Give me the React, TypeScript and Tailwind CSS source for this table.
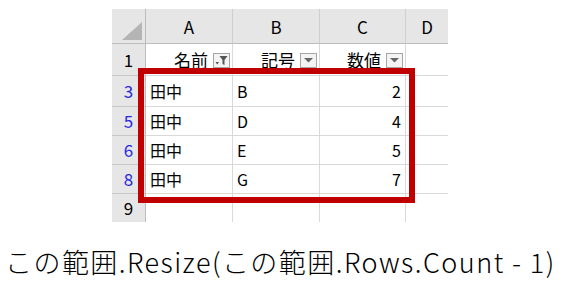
const font = { fontFamily: '"Noto Sans CJK JP", "Noto Sans", sans-serif' };

const rows = [
  { n: '3', name: '田中', code: 'B', value: '2', h: 'h-[31px]' },
  { n: '5', name: '田中', code: 'D', value: '4', h: 'h-[29px]' },
  { n: '6', name: '田中', code: 'E', value: '5', h: 'h-[29px]' },
  { n: '8', name: '田中', code: 'G', value: '7', h: 'h-[29px]' },
];

const FilterButton = ({ active }: { active?: boolean }) => (
  <div className="w-[17px] h-[15px] border border-[#a6a6a6] bg-[#f4f4f4] flex items-center justify-center">
    {active ? (
      <svg width="13" height="11" viewBox="0 0 13 11">
        <path d="M4.5 1h8L9.5 5v5L7.5 9V5z" fill="#555" />
        <path d="M0.5 7h3.5L2.25 9.5z" fill="#555" />
      </svg>
    ) : (
      <svg width="9" height="5" viewBox="0 0 9 5">
        <path d="M0 0h9L4.5 4.5z" fill="#666" />
      </svg>
    )}
  </div>
);

export default function App() {
  return (
    <div className="relative w-[564px] h-[289px] bg-white text-black overflow-hidden" style={font}>
      <div className="pt-[9px] pl-[112px]">
        <div className="grid grid-cols-[34px_87px_87px_86px_42px] w-[336px]">
          {/* column headers */}
          <div className="h-[35px] bg-[#e6e6e6] border-r border-b border-[#bdbdbd] flex items-end justify-end pr-[3px] pb-[3px]">
            <div className="w-0 h-0 border-l-[20px] border-l-transparent border-b-[18px] border-b-[#b4b4b4]" />
          </div>
          {['A', 'B', 'C', 'D'].map((c, i) => (
            <div
              key={c}
              className={`h-[35px] bg-[#e6e6e6] border-b border-[#bdbdbd] flex items-center justify-center text-[17px] pt-[2px] ${
                i < 3 ? 'border-r border-r-[#cfcfcf]' : ''
              }`}
            >
              {c}
            </div>
          ))}

          {/* row 1 */}
          <div className="h-[32px] bg-[#e6e6e6] border-r border-b border-[#c6c6c6] border-r-[#bdbdbd] flex items-center justify-center text-[17px]">
            1
          </div>
          {[
            { t: '名前', active: true },
            { t: '記号' },
            { t: '数値' },
          ].map((h) => (
            <div key={h.t} className="h-[32px] border-r border-b border-[#d9d9d9] flex items-end justify-end gap-[5px] pr-[2px] pb-[7px]">
              <span className="text-[17px] leading-none">{h.t}</span>
              <FilterButton active={h.active} />
            </div>
          ))}
          <div className="h-[32px] border-b border-[#d9d9d9]" />

          {/* data rows */}
          {rows.map((r) => (
            <div key={r.n} className="contents">
              <div className={`${r.h} bg-[#e6e6e6] border-r border-b border-[#c6c6c6] border-r-[#bdbdbd] flex items-center justify-center text-[17px] text-[#2828e0]`}>
                {r.n}
              </div>
              <div className={`${r.h} border-r border-b border-[#d9d9d9] flex items-center pl-[4px] text-[16px]`}>{r.name}</div>
              <div className={`${r.h} border-r border-b border-[#d9d9d9] flex items-center pl-[4px] text-[16px] tracking-[1px]`}>{r.code}</div>
              <div className={`${r.h} border-r border-b border-[#d9d9d9] flex items-center justify-end pr-[4px] text-[16px]`}>{r.value}</div>
              <div className={`${r.h} border-b border-[#d9d9d9]`} />
            </div>
          ))}

          {/* row 9 */}
          <div className="h-[28px] bg-[#e6e6e6] border-r border-[#bdbdbd] flex items-center justify-center text-[17px]">9</div>
          <div className="h-[28px] border-r border-[#d9d9d9]" />
          <div className="h-[28px] border-r border-[#d9d9d9]" />
          <div className="h-[28px] border-r border-[#d9d9d9]" />
          <div className="h-[28px]" />
        </div>
      </div>

      {/* highlight box */}
      <div className="absolute left-[138px] top-[68px] w-[277px] h-[135px] border-[6px] border-[#c00000]" />

      <div className="mt-[24px] pl-[5px] text-[27px] leading-[32px] tracking-[1.45px] font-light whitespace-nowrap">
        この範囲.Resize(この範囲.Rows.Count - 1)
      </div>
    </div>
  );
}
